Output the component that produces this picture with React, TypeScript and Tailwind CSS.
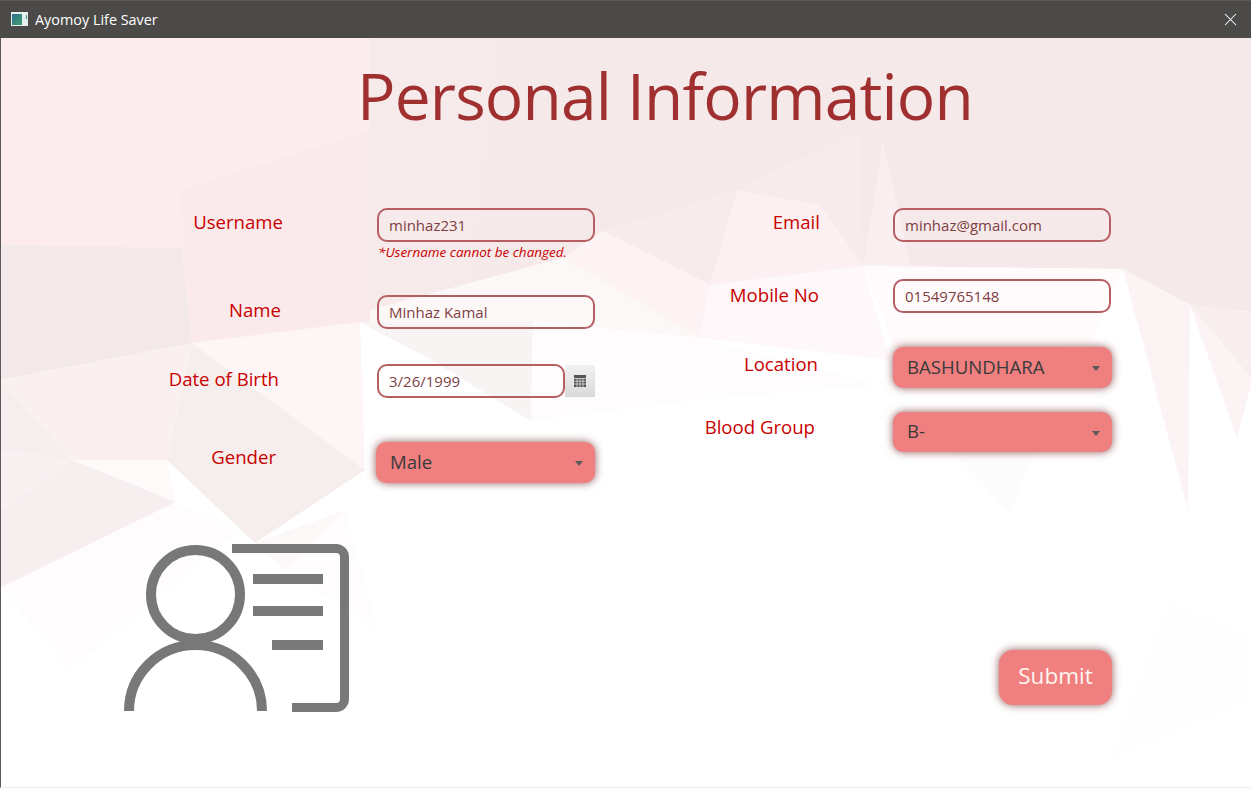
import { X } from 'lucide-react'

const polygons: [string, string][] = [
  // top band
  ['0,38 370,38 370,322 192,343 0,380', '#fcecee'],
  ['370,38 1251,38 1251,312 1190,305 1123,269 863,266 710,285 603,231 563,258 370,310', '#f5e9ea'],
  ['370,38 500,38 470,290 370,310', '#f7eaeb'],
  ['180,190 370,130 370,322 192,343', '#faeaeb'],
  ['0,245 182,248 192,343 0,380', '#f4e9ea'],
  ['603,231 737,190 860,130 863,266 710,285', '#f8ebed'],
  ['737,190 820,205 863,266 710,285', '#fcf0f2'],
  ['883,141 911,267 863,266', '#faeff0'],
  // light band under the top
  ['370,310 563,258 700,338 533,322 370,328', '#fdf8f8'],
  ['603,231 710,285 700,338 563,258', '#fdf3f4'],
  ['710,285 863,266 890,360 700,338', '#fff8fa'],
  ['863,266 1123,269 1090,345 900,360', '#fffafb'],
  ['360,322 370,328 423,355 531,421 533,322', '#f8f4f4'],
  ['533,322 700,338 880,385 700,400 531,421', '#fffcfd'],
  // left side
  ['0,380 192,343 167,460 72,460', '#fbf0f0'],
  ['192,343 360,322 365,470', '#fef5f6'],
  ['192,343 365,470 255,543 167,460', '#f6eded'],
  ['0,380 72,460 0,450', '#f6edee'],
  ['0,450 72,460 0,510', '#f9f0f1'],
  ['72,460 176,502 0,588 0,510', '#f7eeef'],
  ['72,460 167,460 176,502', '#fffafa'],
  ['0,588 176,502 240,530 70,670', '#fffcfd'],
  ['255,543 345,510 285,570', '#fdf8f8'],
  ['285,570 345,510 378,630', '#fefcfc'],
  // right side
  ['1123,269 1190,305 1188,510', '#fcf3f4'],
  ['1190,305 1251,312 1251,378', '#f8eeef'],
  ['1251,385 1237,438 1190,305 1251,378', '#fcf3f4'],
  ['940,440 1010,512 1040,440', '#fdfcfc'],
  ['1110,760 1170,600 1251,640 1251,700', '#fefefe'],
]

const inputClass =
  'h-[34px] rounded-[10px] border-2 border-[#b65f63] bg-transparent px-[10px] text-[15px] text-[#7d3f42] outline-none'
const labelClass = 'text-right text-[18.6px] leading-[24px] text-[#c90000]'

function Select({ value }: { value: string }) {
  return (
    <div className="flex w-full items-center justify-between rounded-[10px] bg-[#f08080] pl-[14px] pr-[12px] text-[18.6px] leading-[24px] text-[#3a3a3a] shadow-[0_0_8px_#8f5a5a]">
      <span className="-mt-[2px]">{value}</span>
      <svg width="8" height="5" viewBox="0 0 8 5" className="mt-[2px]">
        <path d="M0 0h8L4 5z" fill="#5a5a5a" />
      </svg>
    </div>
  )
}

function CardIcon() {
  return (
    <svg width="235" height="176" viewBox="120 540 235 176" fill="none" stroke="#787878">
      <circle cx="195.5" cy="594.5" r="44.5" strokeWidth="10" />
      <path d="M129 711A66.5 66 0 0 1 262 711" strokeWidth="10" />
      <path d="M232 548.5H336a8.5 8.5 0 0 1 8.5 8.5V699a8.5 8.5 0 0 1-8.5 8.5H292" strokeWidth="9" />
      <path d="M253 579H323M253 611H323M272 645H323" strokeWidth="10" />
    </svg>
  )
}

export default function App() {
  return (
    <div className="flex h-[788px] w-[1251px] flex-col overflow-hidden font-['Open_Sans',sans-serif]">
      <div className="flex h-[38px] shrink-0 items-center justify-between border-t border-[#5a5957] bg-[#4c4a48] pl-[11px] pr-[10px] text-white">
        <div className="flex items-center gap-[7px]">
          <svg width="17" height="14" viewBox="0 0 17 14">
            <defs>
              <linearGradient id="appicon" x1="0" y1="0" x2="1" y2="1">
                <stop offset="0" stopColor="#2f6f8f" />
                <stop offset="1" stopColor="#3f9f70" />
              </linearGradient>
            </defs>
            <rect width="17" height="14" fill="#e6eef0" />
            <rect x="1" y="2" width="10" height="11" fill="url(#appicon)" />
            <rect x="15" y="3" width="1" height="4" fill="#3a8f88" />
          </svg>
          <span className="text-[14.4px]">Ayomoy Life Saver</span>
        </div>
        <X size={21} strokeWidth={1.2} />
      </div>

      <main className="relative flex-1 border-b border-l border-b-[#ececec] border-l-[#5a5a5a] bg-white">
        <svg className="absolute inset-0" width="1250" height="749" viewBox="1 38 1250 749">
          {polygons.map(([points, fill]) => (
            <polygon key={points} points={points} fill={fill} />
          ))}
        </svg>

        <div className="relative flex h-full flex-col">
          <h1 className="h-[170px] pl-[78px] pt-[14px] text-center text-[64px] font-normal leading-[88px] tracking-[-0.8px] text-[#a03030]">
            Personal Information
          </h1>

          <div className="flex h-[332px]">
            {/* left column */}
            <div className="w-[594px]">
              <div className="flex">
                <div className={`${labelClass} w-[282px] pt-[2px]`}>Username</div>
                <div className="ml-[94px]">
                  <input readOnly value="minhaz231" className={`${inputClass} w-[218px]`} />
                  <div className="ml-px mt-px text-[13.5px] italic leading-[18px] text-[#c90000]">
                    *Username cannot be changed.
                  </div>
                </div>
              </div>
              <div className="mt-[34px] flex">
                <div className={`${labelClass} w-[280px] pt-[3px]`}>Name</div>
                <input readOnly value="Minhaz Kamal" className={`${inputClass} ml-[96px] w-[218px]`} />
              </div>
              <div className="mt-[35px] flex">
                <div className={`${labelClass} w-[278px] pt-[3px]`}>Date of Birth</div>
                <input readOnly value="3/26/1999" className={`${inputClass} ml-[98px] w-[188px]`} />
                <div className="flex h-[32px] w-[30px] items-center justify-center self-center bg-gradient-to-b from-[#f2f2f2] to-[#d9d9d9]">
                  <svg width="12" height="12" viewBox="0 0 12 12">
                    <rect width="12" height="12" fill="#555" />
                    <path d="M0 3.5H12M0 6.2H12M0 9H12M3 3V12M6 3V12M9 3V12" stroke="#ddd" strokeWidth="0.8" />
                  </svg>
                </div>
              </div>
              <div className="mt-[44px] flex">
                <div className={`${labelClass} w-[275px] pt-[3px]`}>Gender</div>
                <div className="ml-[100px] flex h-[41px] w-[219px]">
                  <Select value="Male" />
                </div>
              </div>
            </div>

            {/* right column */}
            <div className="w-[518px]">
              <div className="flex">
                <div className={`${labelClass} w-[225px] pt-[2px]`}>Email</div>
                <input readOnly value="minhaz@gmail.com" className={`${inputClass} ml-[73px] w-[218px]`} />
              </div>
              <div className="mt-[37px] flex">
                <div className={`${labelClass} w-[224px] pt-[4px]`}>Mobile No</div>
                <input readOnly value="01549765148" className={`${inputClass} ml-[74px] w-[218px]`} />
              </div>
              <div className="mt-[34px] flex">
                <div className={`${labelClass} w-[223px] pt-[5px]`}>Location</div>
                <div className="ml-[75px] flex h-[41px] w-[219px]">
                  <Select value="BASHUNDHARA" />
                </div>
              </div>
              <div className="mt-[24px] flex">
                <div className={`${labelClass} w-[220px] pt-[3px]`}>Blood Group</div>
                <div className="ml-[78px] flex h-[40px] w-[219px]">
                  <Select value="B-" />
                </div>
              </div>
            </div>
          </div>

          <div className="flex items-start">
            <div className="ml-[119px]">
              <CardIcon />
            </div>
            <button className="ml-[644px] mt-[110px] h-[55px] w-[113px] rounded-[14px] bg-[#f08080] pb-[4px] text-[22.5px] text-[#fff5f0] shadow-[0_0_8px_#8f5a5a]">
              Submit
            </button>
          </div>
        </div>
      </main>
    </div>
  )
}
